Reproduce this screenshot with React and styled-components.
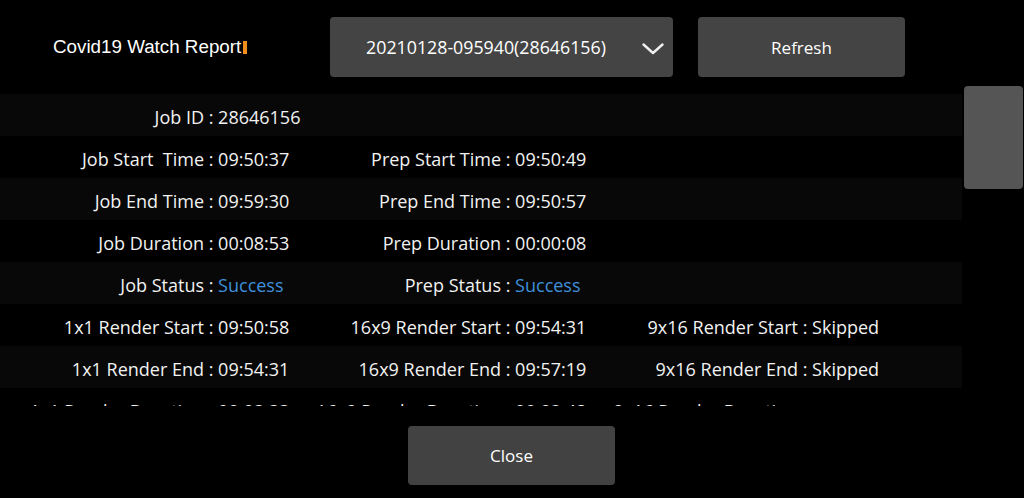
import styled, { createGlobalStyle } from "styled-components";

const GlobalStyle = createGlobalStyle`
  html, body {
    margin: 0;
    padding: 0;
    background: #000;
  }
  body {
    width: 1024px;
    height: 498px;
    overflow: hidden;
    font-family: "Open Sans", "Noto Sans", sans-serif;
    color: #f2f2f2;
  }
`;

const Screen = styled.div`
  display: flex;
  flex-direction: column;
  width: 1024px;
  height: 498px;
  background: #000;
`;

const Header = styled.div`
  display: flex;
  align-items: center;
  height: 60px;
  padding: 17px 0 9px 0;
`;

const Title = styled.div`
  display: flex;
  align-items: center;
  width: 330px;
  padding-left: 53px;
  box-sizing: border-box;
  font-family: "Liberation Sans", Arial, sans-serif;
  font-size: 18.8px;
  color: #fff;
`;

const Caret = styled.span`
  display: inline-block;
  width: 4px;
  height: 13px;
  margin-left: 2px;
  margin-top: 1px;
  background: #f28c1a;
`;

const Select = styled.div`
  position: relative;
  display: flex;
  align-items: center;
  justify-content: center;
  width: 343px;
  height: 60px;
  box-sizing: border-box;
  padding-right: 31px;
  border-radius: 4px;
  background: #444;
  font-size: 17.8px;
  color: #fff;
`;

const Chevron = styled.svg`
  position: absolute;
  right: 9px;
  top: 26px;
`;

const Button = styled.div`
  display: flex;
  align-items: center;
  justify-content: center;
  width: 207px;
  height: ${({ tall }) => tall}px;
  margin-left: ${({ gap }) => gap || 0}px;
  border-radius: 4px;
  background: ${({ bg }) => bg || "#444"};
  font-size: 17px;
  color: #fff;
`;

const Body = styled.div`
  display: flex;
  flex-direction: row;
`;

const List = styled.div`
  width: 962px;
  height: 312px;
  margin-top: 8px;
  overflow: hidden;
`;

const Row = styled.div`
  display: grid;
  grid-template-columns: 300px 298px 1fr;
  align-items: center;
  height: 42px;
  box-sizing: border-box;
  padding-top: 3px;
  background: ${({ striped }) => (striped ? "#080808" : "#000")};
  font-size: 18px;
`;

const Cell = styled.div`
  display: flex;
  align-items: center;
  white-space: pre;
`;

const Label = styled.span`
  width: ${({ w }) => w}px;
  text-align: right;
  flex-shrink: 0;
`;

const Value = styled.span`
  color: ${({ accent }) => (accent ? "#3f8fdb" : "#f2f2f2")};
`;

const Track = styled.div`
  flex: 1;
  display: flex;
  justify-content: center;
`;

const Thumb = styled.div`
  width: 59px;
  height: 103px;
  margin-left: 1px;
  border-radius: 4px;
  background: #555;
`;

const Footer = styled.div`
  display: flex;
  justify-content: center;
  padding: 20px 1px 0 0;
`;

const labelWidths = [204, 201, 200];

const rows = [
  [["Job ID", "28646156"]],
  [
    ["Job Start  Time", "09:50:37"],
    ["Prep Start Time", "09:50:49"],
  ],
  [
    ["Job End Time", "09:59:30"],
    ["Prep End Time", "09:50:57"],
  ],
  [
    ["Job Duration", "00:08:53"],
    ["Prep Duration", "00:00:08"],
  ],
  [
    ["Job Status", "Success", true],
    ["Prep Status", "Success", true],
  ],
  [
    ["1x1 Render Start", "09:50:58"],
    ["16x9 Render Start", "09:54:31"],
    ["9x16 Render Start", "Skipped"],
  ],
  [
    ["1x1 Render End", "09:54:31"],
    ["16x9 Render End", "09:57:19"],
    ["9x16 Render End", "Skipped"],
  ],
  [
    ["1x1 Render Duration", "00:03:33"],
    ["16x9 Render Duration", "00:02:48"],
    ["9x16 Render Duration", "-"],
  ],
];

export default function App() {
  return (
    <Screen>
      <GlobalStyle />
      <Header>
        <Title>
          Covid19 Watch Report
          <Caret />
        </Title>
        <Select>
          20210128-095940(28646156)
          <Chevron width="22" height="12" viewBox="0 0 22 12">
            <path
              d="M1.5 1.5 L11 10 L20.5 1.5"
              fill="none"
              stroke="#f0f0f0"
              strokeWidth="2.4"
              strokeLinecap="round"
              strokeLinejoin="round"
            />
          </Chevron>
        </Select>
        <Button tall={60} gap={25}>
          Refresh
        </Button>
      </Header>
      <Body>
        <List>
          {rows.map((cells, i) => (
            <Row key={i} striped={i % 2 === 0}>
              {cells.map(([label, value, accent], j) => (
                <Cell key={j}>
                  <Label w={labelWidths[j]}>{label}</Label>
                  <Value> : </Value>
                  <Value accent={accent}>{value}</Value>
                </Cell>
              ))}
            </Row>
          ))}
        </List>
        <Track>
          <Thumb />
        </Track>
      </Body>
      <Footer>
        <Button tall={59} bg="#424242">
          Close
        </Button>
      </Footer>
    </Screen>
  );
}
